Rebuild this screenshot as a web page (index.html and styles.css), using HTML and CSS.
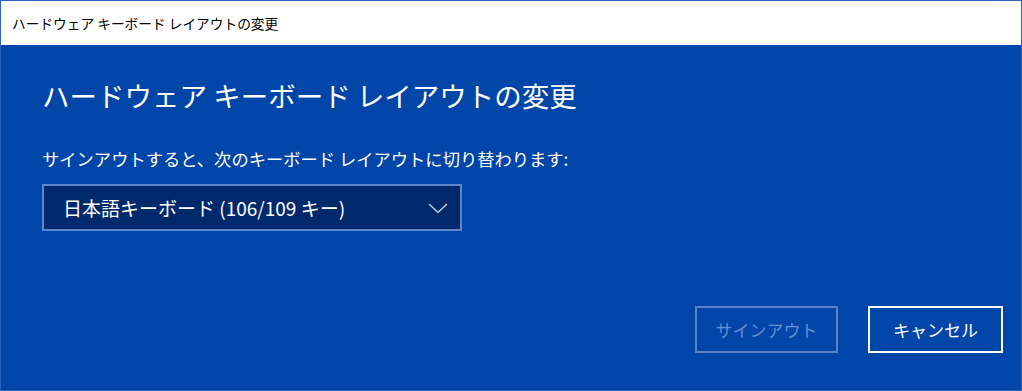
FILE: index.html
```html
<!DOCTYPE html>
<html lang="ja">
<head>
  <meta charset="UTF-8" />
  <title>ハードウェア キーボード レイアウトの変更</title>
  <link rel="stylesheet" href="styles.css">
</head>
<body>

<div class="window">
  <div class="titlebar">ハードウェア キーボード レイアウトの変更</div>

  <div class="content">
    <h1>ハードウェア キーボード レイアウトの変更</h1>
    <p class="hint">サインアウトすると、次のキーボード レイアウトに切り替わります:</p>

    <div class="select">
      <span>日本語キーボード (106/109 キー)</span>
      <svg class="chevron" width="20" height="10" viewBox="0 0 20 10">
        <polyline points="1,1 10,9.5 19,1" fill="none" stroke="#c8d3e8" stroke-width="1.3"/>
      </svg>
    </div>

    <div class="actions">
      <button class="btn disabled">サインアウト</button>
      <button class="btn primary">キャンセル</button>
    </div>
  </div>
</div>

</body>
</html>
```

FILE: styles.css
```css
* {
  box-sizing: border-box;
  margin: 0;
  padding: 0;
  font-family: "Noto Sans CJK JP", "Noto Sans", sans-serif;
}

body {
  background: #ffffff;
}

.window {
  width: 1022px;
  height: 391px;
  border: 1px solid #2b63c1;
  display: flex;
  flex-direction: column;
}

.titlebar {
  height: 44px;
  background: #ffffff;
  color: #000000;
  font-size: 13.7px;
  line-height: 44px;
  padding-left: 11px;
  flex-shrink: 0;
}

.content {
  flex: 1;
  background: #0045a8;
  color: #ffffff;
  display: flex;
  flex-direction: column;
  padding: 33px 18px 37px 41px;
}

h1 {
  font-size: 27.5px;
  font-weight: 400;
  line-height: 35px;
}

.hint {
  font-size: 17.3px;
  line-height: 22px;
  margin-top: 35px;
}

.select {
  margin-top: 14px;
  width: 420px;
  height: 47px;
  border: 2px solid #5f86cd;
  background: #00296b;
  display: flex;
  align-items: center;
  justify-content: space-between;
  padding: 0 12px 0 19px;
  font-size: 19px;
}

.chevron {
  display: block;
}

.actions {
  margin-top: auto;
  display: flex;
  justify-content: flex-end;
  gap: 30px;
}

.btn {
  height: 47px;
  background: transparent;
  font-size: 17px;
  border: 2px solid;
}

.btn.disabled {
  width: 143px;
  border-color: #5a80c8;
  color: #6a8ed0;
}

.btn.primary {
  width: 135px;
  border-color: #ffffff;
  color: #ffffff;
}
```
